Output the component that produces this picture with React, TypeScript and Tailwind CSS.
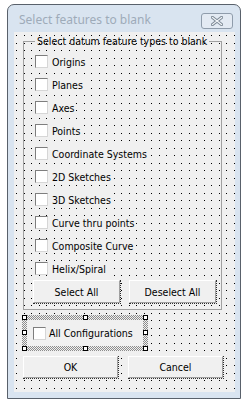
import type { ReactNode } from "react";

const features = [
  "Origins",
  "Planes",
  "Axes",
  "Points",
  "Coordinate Systems",
  "2D Sketches",
  "3D Sketches",
  "Curve thru points",
  "Composite Curve",
  "Helix/Spiral",
];

function CheckBox() {
  return (
    <span className="block w-[13px] h-[13px] shrink-0 bg-white border border-t-[#7e7e7e] border-l-[#7e7e7e] border-r-[#d6d6d6] border-b-[#d6d6d6]" />
  );
}

function Btn({ children, className }: { children: ReactNode; className: string }) {
  return (
    <div className={`border-r border-b border-dotted border-[#2e2e2e] ${className}`}>
      <div className="h-full w-full flex items-center justify-center bg-[#f0f0f0] border border-t-white border-l-white border-r-[#a0a0a0] border-b-[#a0a0a0] text-black">
        {children}
      </div>
    </div>
  );
}

function Handle({ className }: { className: string }) {
  return <span className={`absolute w-[5px] h-[5px] bg-white border border-black ${className}`} />;
}

export default function App() {
  return (
    <div className="w-[248px] h-[403px] bg-white pt-[4px] pl-[7px] font-['DejaVu_Sans_Condensed','Liberation_Sans',sans-serif] text-[10.5px] leading-[14px] whitespace-nowrap">
      {/* Window */}
      <div className="w-[234px] h-[395px] rounded-t-[7px] border border-[#59616b] bg-[#d9e4f0] flex flex-col">
        {/* Title bar */}
        <div className="h-[27px] shrink-0 flex items-center pl-[11px] pr-[7px]">
          <span className="font-['Noto_Sans',sans-serif] text-[12px] text-[#9eabb9] mt-[3px]">
            Select features to blank
          </span>
          <div className="ml-auto mt-[5px] w-[32px] h-[16px] rounded-[3px] border border-[#8f9cab] bg-[#e3eaf3] flex items-center justify-center">
            <svg width="12" height="10" viewBox="0 0 12 10">
              <path d="M1.5 1.5 L10.5 8.5 M10.5 1.5 L1.5 8.5" stroke="#7f8b98" strokeWidth="3.2" strokeLinecap="square" />
              <path d="M1.5 1.5 L10.5 8.5 M10.5 1.5 L1.5 8.5" stroke="#f4f7fa" strokeWidth="1.2" strokeLinecap="square" />
            </svg>
          </div>
        </div>

        {/* Client area with designer grid */}
        <div className="ml-[6px] w-[221px] h-[360px] bg-[#f0f0f0] bg-[url('data:image/svg+xml,%3Csvg%20xmlns=%27http://www.w3.org/2000/svg%27%20width=%2715%27%20height=%2715%27%3E%3Cpath%20d=%27M0%200h1v1H0zM8%200h1v1H8zM0%208h1v1H0zM8%208h1v1H8z%27/%3E%3C/svg%3E')] bg-[position:2px_3px]">
          <fieldset className="ml-[9px] mt-[2px] w-[199px] h-[276px] border border-[#a0a0a0]">
            <legend className="ml-[11px] px-[2px] text-black">Select datum feature types to blank</legend>
            <div className="pt-[2px]">
              {features.map((f) => (
                <div key={f} className="h-[23px] flex items-center pl-[11px] gap-[4px] text-black">
                  <CheckBox />
                  <span className="bg-[#f0f0f0] pr-[2px]">{f}</span>
                </div>
              ))}
            </div>
            <div className="flex gap-[8px] pl-[9px]">
              <Btn className="w-[88px] h-[24px]">Select All</Btn>
              <Btn className="w-[88px] h-[24px]">Deselect All</Btn>
            </div>
          </fieldset>

          {/* Selected control */}
          <div className="relative ml-[8px] mt-[5px] w-[126px] h-[36px] p-[5px] bg-[#f0f0f0] bg-[conic-gradient(#8c8c8c_25%,transparent_0_50%,#8c8c8c_0_75%,transparent_0)] bg-[length:2px_2px]">
            <div className="h-full bg-[#f0f0f0] flex items-center pl-[6px] gap-[3px] text-black">
              <CheckBox />
              <span>All Configurations</span>
            </div>
            <Handle className="top-0 left-0" />
            <Handle className="top-0 left-[61px]" />
            <Handle className="top-0 right-0" />
            <Handle className="top-[15px] left-0" />
            <Handle className="top-[15px] right-0" />
            <Handle className="bottom-0 left-0" />
            <Handle className="bottom-0 left-[61px]" />
            <Handle className="bottom-0 right-0" />
          </div>

          <div className="flex gap-[9px] ml-[9px] mt-[5px]">
            <Btn className="w-[96px] h-[23px]">OK</Btn>
            <Btn className="w-[96px] h-[23px]">Cancel</Btn>
          </div>
        </div>
      </div>
    </div>
  );
}
